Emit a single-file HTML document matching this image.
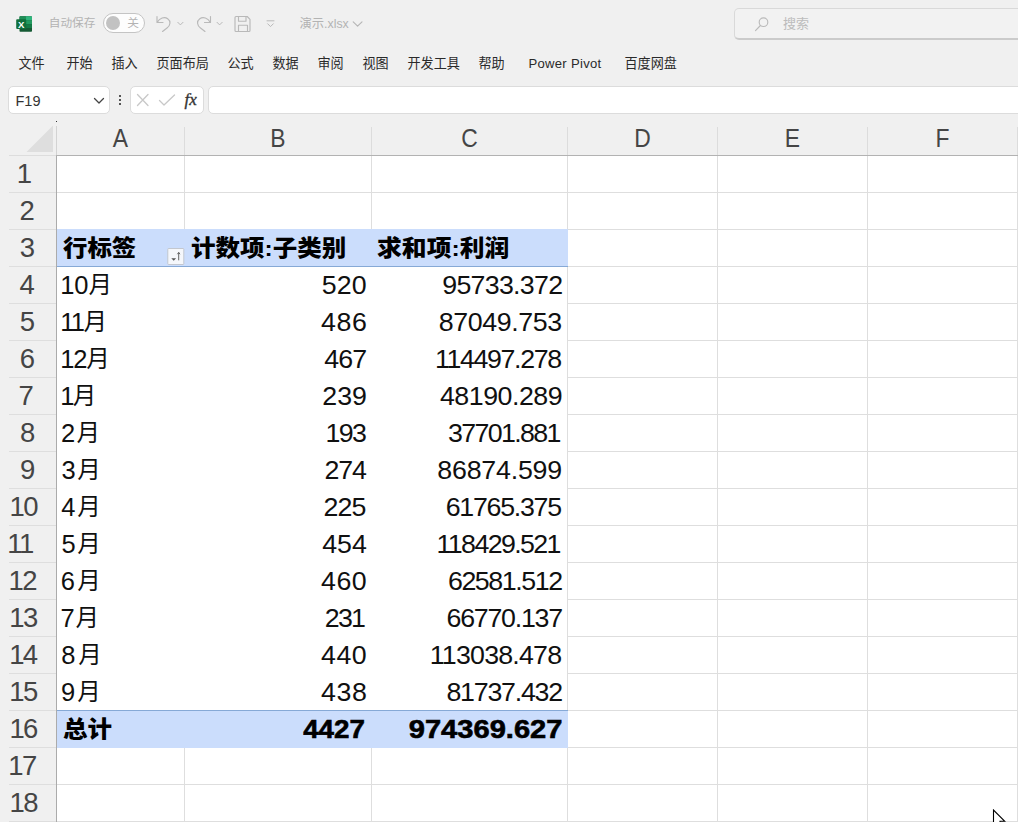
<!DOCTYPE html>
<html lang="zh-CN"><head><meta charset="utf-8"><title>演示.xlsx - Excel</title>
<style>
html,body{margin:0;padding:0;}
body{width:1018px;height:822px;overflow:hidden;background:#f0f0f0;position:relative;
 font-family:"Liberation Sans","Noto Sans CJK SC",sans-serif;color:#1a1a1a;}
.abs{position:absolute;}
.t{position:absolute;white-space:nowrap;line-height:1;}
.g{color:#b3b3b3;font-size:12px;}
.menu{position:absolute;top:56px;font-size:13.100px;color:#2a2a2a;white-space:nowrap;line-height:16px;}
.box{position:absolute;top:86px;height:28px;background:#fff;border:1px solid #dcdcdc;border-radius:5px;box-sizing:border-box;}
#sheet{position:absolute;left:0;top:120px;width:1018px;height:702px;background:#fff;}
.hl{position:absolute;left:57px;width:961px;height:1px;background:#dedede;}
.vl{position:absolute;top:36px;width:1px;height:666px;background:#dedede;}
.rn{position:absolute;left:0;text-align:center;font-size:27.500px;line-height:37px;color:#454545;height:37px;white-space:nowrap;}
.cn{position:absolute;top:0;text-align:center;font-size:26px;line-height:36px;color:#454545;height:36px;transform:scaleX(0.880);}
.cell{position:absolute;height:37px;line-height:37px;font-size:25.500px;color:#101010;white-space:nowrap;}
.cell .c{font-size:23.500px;letter-spacing:0;position:relative;top:-0.600px;}
.r{text-align:right;transform:scaleX(1.050);transform-origin:100% 50%;}
.hd{position:absolute;height:37px;line-height:37px;font-size:24.500px;font-weight:900;color:#000;white-space:nowrap;transform-origin:0 50%;}
.bn{position:absolute;height:37px;line-height:37px;font-size:25.500px;font-weight:700;color:#000;white-space:nowrap;text-align:right;transform-origin:100% 50%;-webkit-text-stroke:0.600px #000;}
</style></head><body>

<div id="title">
<svg class="abs" style="left:16px;top:16px" width="16" height="16" viewBox="0 0 16 16">
 <path d="M4.300 0.300 H15.200 a0.800 0.800 0 0 1 0.800 0.800 V14.900 a0.800 0.800 0 0 1 -0.800 0.800 H4.300 a0.800 0.800 0 0 1 -0.800 -0.800 V1.100 a0.800 0.800 0 0 1 0.800 -0.800 z" fill="#155a34"/>
 <path d="M4.300 0.300 H9.900 V4.200 H3.500 V1.100 a0.800 0.800 0 0 1 0.800 -0.800 z" fill="#1f8f57"/>
 <path d="M9.900 0.300 H15.200 a0.800 0.800 0 0 1 0.800 0.800 V4.200 H9.900 z" fill="#2fb57c"/>
 <rect x="3.500" y="4.200" width="6.400" height="4" fill="#117a41"/>
 <rect x="9.900" y="4.200" width="6.100" height="4" fill="#239a60"/>
 <rect x="9.900" y="8.200" width="6.100" height="3.800" fill="#157a46"/>
 <rect x="0.200" y="3.200" width="10" height="9.800" rx="0.900" fill="#116f3c"/>
 <text x="5.200" y="11.600" font-size="9.600" font-weight="700" fill="#fff" text-anchor="middle" font-family="Liberation Sans, sans-serif">X</text>
</svg>
<div class="t g" style="left:48.700px;top:17.200px;font-size:11.700px;">自动保存</div>
<div class="abs" style="left:103px;top:13px;width:42px;height:20px;border:1px solid #c4c4c4;border-radius:10px;box-sizing:border-box;background:#fdfdfd;"></div>
<div class="abs" style="left:106px;top:16px;width:14px;height:14px;border-radius:7px;background:#c2c2c2;"></div>
<div class="t g" style="left:127.200px;top:17.200px;font-size:11.700px;">关</div>
<svg class="abs" style="left:155px;top:13px" width="125" height="22" viewBox="0 0 125 22" fill="none" stroke="#b9b9b9" stroke-width="1.150" stroke-linecap="round" stroke-linejoin="round">
 <path d="M2 3.500 V9.500 H8 M2.300 9.200 C4.500 5 9.500 3.400 12.700 5.700 C16 8.100 15.600 12.300 12 15 L7.500 18.500"/>
 <path d="M22.800 9.300 l2.600 2.600 l2.600 -2.600" stroke-width="1"/>
 <path d="M55.500 3.500 V9.500 H49.500 M55.200 9.200 C53 5 48 3.400 44.800 5.700 C41.500 8.100 41.900 12.300 45.500 15 L50 18.500"/>
 <path d="M62 9.300 l2.600 2.600 l2.600 -2.600" stroke-width="1"/>
 <path d="M81 3.500 h11.200 l2.800 2.800 v11.200 a1 1 0 0 1 -1 1 h-13 a1 1 0 0 1 -1 -1 v-13 a1 1 0 0 1 1 -1 z M83.500 3.500 v4.700 h7.500 v-4.700 M83.500 18.500 v-6.300 h9 v6.300"/>
 <path d="M112 7.800 h7 M112.700 10.800 l2.800 2.800 l2.800 -2.800" stroke-width="1"/>
</svg>
<div class="t g" style="left:299.500px;top:17.500px;font-size:12.300px;">演示.xlsx</div>
<svg class="abs" style="left:352px;top:19px" width="12" height="10" viewBox="0 0 12 10" fill="none" stroke="#b6b6b6" stroke-width="1.150" stroke-linecap="round" stroke-linejoin="round"><path d="M1.200 2.800 l4.400 4.400 l4.400 -4.400"/></svg>
<div class="abs" style="left:734px;top:8px;width:300px;height:32px;border:1px solid #d9d9d9;border-bottom:2px solid #cbcbcb;border-radius:5px;box-sizing:border-box;background:#f2f2f2;"></div>
<svg class="abs" style="left:754px;top:16px" width="16" height="16" viewBox="0 0 16 16" fill="none" stroke="#bababa" stroke-width="1.150" stroke-linecap="round"><circle cx="9.500" cy="6.200" r="4.300"/><path d="M6.400 9.500 L1.500 14.600"/></svg>
<div class="t g" style="left:783px;top:17px;font-size:13px;color:#bcbcbc;">搜索</div>
</div>

<div class="menu" style="left:18.5px;">文件</div>
<div class="menu" style="left:66.5px;">开始</div>
<div class="menu" style="left:111.5px;">插入</div>
<div class="menu" style="left:156.5px;">页面布局</div>
<div class="menu" style="left:227.5px;">公式</div>
<div class="menu" style="left:272.5px;">数据</div>
<div class="menu" style="left:317.5px;">审阅</div>
<div class="menu" style="left:362.5px;">视图</div>
<div class="menu" style="left:407.5px;">开发工具</div>
<div class="menu" style="left:478.5px;">帮助</div>
<div class="menu" style="left:528.5px;letter-spacing:0.280px;">Power Pivot</div>
<div class="menu" style="left:624.5px;">百度网盘</div>

<div class="box" style="left:8px;width:102px;"></div>
<div class="t" style="left:15.500px;top:93.500px;font-size:14.500px;color:#333;">F19</div>
<svg class="abs" style="left:92.500px;top:96px" width="12" height="10" viewBox="0 0 12 10" fill="none" stroke="#444" stroke-width="1.300" stroke-linecap="round" stroke-linejoin="round"><path d="M1.500 2.500 l4.500 4.500 l4.500 -4.500"/></svg>
<div class="abs" style="left:119px;top:95px;width:2px;height:2px;background:#555;box-shadow:0 4px 0 #555,0 8px 0 #555;"></div>
<div class="box" style="left:130px;width:74px;"></div>
<svg class="abs" style="left:134px;top:90px" width="48" height="20" viewBox="0 0 48 20" fill="none" stroke="#c8c8c8" stroke-width="1.300" stroke-linecap="round" stroke-linejoin="round">
 <path d="M3.500 4.500 l10.500 11 M14 4.500 l-10.500 11"/>
 <path d="M25.500 10.500 l4.500 4.500 l10.500 -10"/>
</svg>
<div class="t" style="left:184.500px;top:90.500px;font-size:17px;font-style:italic;-webkit-text-stroke:0.350px #333;color:#333;font-family:'Liberation Serif',serif;">fx</div>
<div class="box" style="left:208px;width:820px;"></div>

<div id="sheet">
<div class="abs" style="left:0;top:0;width:1018px;height:35px;background:#f0f0f0;"></div>
<div class="abs" style="left:0;top:0;width:56px;height:702px;background:#f0f0f0;"></div>
<svg class="abs" style="left:26px;top:5px" width="28" height="28" viewBox="0 0 28 28"><path d="M27 0.500 V27 H0.500 Z" fill="#dedede"/></svg>
<div class="abs" style="left:56px;top:6px;width:1px;height:30px;background:#d3d3d3;"></div>
<div class="abs" style="left:9px;top:35px;width:47px;height:1px;background:#dddddd;"></div>
<div class="abs" style="left:56px;top:35px;width:962px;height:1px;background:#b2b2b2;"></div>
<div class="abs" style="left:56px;top:36px;width:1px;height:666px;background:#ababab;"></div>
<div class="cn" style="left:57px;width:127px;">A</div>
<div class="abs" style="left:184px;top:7px;width:1px;height:28px;background:#dcdcdc;"></div>
<div class="vl" style="left:184px;"></div>
<div class="cn" style="left:185px;width:186px;">B</div>
<div class="abs" style="left:371px;top:7px;width:1px;height:28px;background:#dcdcdc;"></div>
<div class="vl" style="left:371px;"></div>
<div class="cn" style="left:372px;width:195px;">C</div>
<div class="abs" style="left:567px;top:7px;width:1px;height:28px;background:#dcdcdc;"></div>
<div class="vl" style="left:567px;"></div>
<div class="cn" style="left:568px;width:149px;">D</div>
<div class="abs" style="left:717px;top:7px;width:1px;height:28px;background:#dcdcdc;"></div>
<div class="vl" style="left:717px;"></div>
<div class="cn" style="left:718px;width:149px;">E</div>
<div class="abs" style="left:867px;top:7px;width:1px;height:28px;background:#dcdcdc;"></div>
<div class="vl" style="left:867px;"></div>
<div class="cn" style="left:868px;width:149px;">F</div>
<div class="abs" style="left:1017px;top:7px;width:1px;height:28px;background:#dcdcdc;"></div>
<div class="vl" style="left:1017px;"></div>
<div class="rn" style="top:35px;left:16.756px;letter-spacing:0px;">1</div>
<div class="hl" style="top:72px;"></div>
<div class="abs" style="left:9px;top:72px;width:47px;height:1px;background:#dedede;"></div>
<div class="rn" style="top:72px;left:19.392px;letter-spacing:0px;">2</div>
<div class="hl" style="top:109px;"></div>
<div class="abs" style="left:9px;top:109px;width:47px;height:1px;background:#dedede;"></div>
<div class="rn" style="top:109px;left:19.625px;letter-spacing:0px;">3</div>
<div class="hl" style="top:146px;"></div>
<div class="abs" style="left:9px;top:146px;width:47px;height:1px;background:#dedede;"></div>
<div class="rn" style="top:146px;left:19.437px;letter-spacing:0px;">4</div>
<div class="hl" style="top:183px;"></div>
<div class="abs" style="left:9px;top:183px;width:47px;height:1px;background:#dedede;"></div>
<div class="rn" style="top:183px;left:19.81px;letter-spacing:0px;">5</div>
<div class="hl" style="top:220px;"></div>
<div class="abs" style="left:9px;top:220px;width:47px;height:1px;background:#dedede;"></div>
<div class="rn" style="top:220px;left:19.788px;letter-spacing:0px;">6</div>
<div class="hl" style="top:257px;"></div>
<div class="abs" style="left:9px;top:257px;width:47px;height:1px;background:#dedede;"></div>
<div class="rn" style="top:257px;left:18.436px;letter-spacing:0px;">7</div>
<div class="hl" style="top:294px;"></div>
<div class="abs" style="left:9px;top:294px;width:47px;height:1px;background:#dedede;"></div>
<div class="rn" style="top:294px;left:19.937px;letter-spacing:0px;">8</div>
<div class="hl" style="top:331px;"></div>
<div class="abs" style="left:9px;top:331px;width:47px;height:1px;background:#dedede;"></div>
<div class="rn" style="top:331px;left:19.93px;letter-spacing:0px;">9</div>
<div class="hl" style="top:368px;"></div>
<div class="abs" style="left:9px;top:368px;width:47px;height:1px;background:#dedede;"></div>
<div class="rn" style="top:368px;left:9.591px;letter-spacing:-1.6px;">10</div>
<div class="hl" style="top:405px;"></div>
<div class="abs" style="left:9px;top:405px;width:47px;height:1px;background:#dedede;"></div>
<div class="rn" style="top:405px;left:7.312px;letter-spacing:-1.6px;">11</div>
<div class="hl" style="top:442px;"></div>
<div class="abs" style="left:9px;top:442px;width:47px;height:1px;background:#dedede;"></div>
<div class="rn" style="top:442px;left:8.605px;letter-spacing:-1.6px;">12</div>
<div class="hl" style="top:479px;"></div>
<div class="abs" style="left:9px;top:479px;width:47px;height:1px;background:#dedede;"></div>
<div class="rn" style="top:479px;left:9.317px;letter-spacing:-1.6px;">13</div>
<div class="hl" style="top:516px;"></div>
<div class="abs" style="left:9px;top:516px;width:47px;height:1px;background:#dedede;"></div>
<div class="rn" style="top:516px;left:9.17px;letter-spacing:-1.6px;">14</div>
<div class="hl" style="top:553px;"></div>
<div class="abs" style="left:9px;top:553px;width:47px;height:1px;background:#dedede;"></div>
<div class="rn" style="top:553px;left:9.293px;letter-spacing:-1.6px;">15</div>
<div class="hl" style="top:590px;"></div>
<div class="abs" style="left:9px;top:590px;width:47px;height:1px;background:#dedede;"></div>
<div class="rn" style="top:590px;left:9.427px;letter-spacing:-1.6px;">16</div>
<div class="hl" style="top:627px;"></div>
<div class="abs" style="left:9px;top:627px;width:47px;height:1px;background:#dedede;"></div>
<div class="rn" style="top:627px;left:8.221px;letter-spacing:-1.6px;">17</div>
<div class="hl" style="top:664px;"></div>
<div class="abs" style="left:9px;top:664px;width:47px;height:1px;background:#dedede;"></div>
<div class="rn" style="top:664px;left:9.522px;letter-spacing:-1.6px;">18</div>
<div class="hl" style="top:701px;"></div>
<div class="abs" style="left:9px;top:701px;width:47px;height:1px;background:#dedede;"></div>
<div class="abs" style="left:57px;top:146px;width:510px;height:444px;background:#fff;"></div>
<div class="abs" style="left:57px;top:109px;width:511px;height:37px;background:#cbddfc;border-bottom:1px solid #86a9d6;"></div>
<div class="abs" style="left:57px;top:590px;width:511px;height:37px;background:#cbddfc;border-top:1px solid #86a9d6;"></div>
<div class="hd" style="left:63.043px;top:110px;transform:scale(0.997,0.920);">行标签</div>
<div class="hd" style="left:191.113px;top:110px;transform:scale(1.001,0.920);">计数项:子类别</div>
<div class="hd" style="left:377.421px;top:110px;transform:scale(1.013,0.920);">求和项:利润</div>
<svg class="abs" style="left:167px;top:128px" width="18" height="17" viewBox="0 0 18 17">
<rect x="0.800" y="0.500" width="16" height="16" rx="0.800" fill="#f5f7fb" stroke="#bfc3ca" stroke-width="0.900"/>
<path d="M4.300 10.200 h4.800 l-2.400 2.600 z" fill="#555"/><path d="M11.700 12.300 V4.600 M10.400 6.200 L11.700 4.400 L13 6.200" stroke="#555" stroke-width="0.900" fill="none"/>
</svg>
<div class="cell" style="left:60.165px;top:147px;letter-spacing:-0.019px;">10<span class="c">月</span></div>
<div class="cell r" style="left:185px;width:181.97px;top:147px;letter-spacing:0.206px;">520</div>
<div class="cell r" style="left:372px;width:190.343px;top:147px;letter-spacing:-0.687px;">95733.372</div>
<div class="cell" style="left:60.165px;top:184px;letter-spacing:-1.6px;">11<span class="c">月</span></div>
<div class="cell r" style="left:185px;width:182.479px;top:184px;letter-spacing:0.538px;">486</div>
<div class="cell r" style="left:372px;width:189.693px;top:184px;letter-spacing:-0.391px;">87049.753</div>
<div class="cell" style="left:60.165px;top:221px;letter-spacing:-1.092px;">12<span class="c">月</span></div>
<div class="cell r" style="left:185px;width:181.451px;top:221px;letter-spacing:-0.782px;">467</div>
<div class="cell r" style="left:372px;width:188.683px;top:221px;letter-spacing:-1.318px;">114497.278</div>
<div class="cell" style="left:60.165px;top:258px;letter-spacing:-1.578px;">1<span class="c">月</span></div>
<div class="cell r" style="left:185px;width:181.851px;top:258px;letter-spacing:-0.055px;">239</div>
<div class="cell r" style="left:372px;width:190.166px;top:258px;letter-spacing:-0.462px;">48190.289</div>
<div class="cell" style="left:60.954px;top:295px;letter-spacing:1.468px;">2<span class="c">月</span></div>
<div class="cell r" style="left:185px;width:180.179px;top:295px;letter-spacing:-1.6px;">193</div>
<div class="cell r" style="left:372px;width:187.887px;top:295px;letter-spacing:-1.549px;">37701.881</div>
<div class="cell" style="left:61.476px;top:332px;letter-spacing:1.465px;">3<span class="c">月</span></div>
<div class="cell r" style="left:185px;width:180.696px;top:332px;letter-spacing:-1.11px;">274</div>
<div class="cell r" style="left:372px;width:189.908px;top:332px;letter-spacing:-0.206px;">86874.599</div>
<div class="cell" style="left:61.246px;top:369px;letter-spacing:1.696px;">4<span class="c">月</span></div>
<div class="cell r" style="left:185px;width:180.71px;top:369px;letter-spacing:-0.747px;">225</div>
<div class="cell r" style="left:372px;width:188.835px;top:369px;letter-spacing:-1.209px;">61765.375</div>
<div class="cell" style="left:61.391px;top:406px;letter-spacing:1.55px;">5<span class="c">月</span></div>
<div class="cell r" style="left:185px;width:181.799px;top:406px;letter-spacing:-0.007px;">454</div>
<div class="cell r" style="left:372px;width:187.901px;top:406px;letter-spacing:-1.535px;">118429.521</div>
<div class="cell" style="left:60.871px;top:443px;letter-spacing:2.07px;">6<span class="c">月</span></div>
<div class="cell r" style="left:185px;width:182.213px;top:443px;letter-spacing:0.448px;">460</div>
<div class="cell r" style="left:372px;width:189.674px;top:443px;letter-spacing:-1.356px;">62581.512</div>
<div class="cell" style="left:60.525px;top:480px;letter-spacing:0.678px;">7<span class="c">月</span></div>
<div class="cell r" style="left:185px;width:179.316px;top:480px;letter-spacing:-1.6px;">231</div>
<div class="cell r" style="left:372px;width:189.835px;top:480px;letter-spacing:-1.195px;">66770.137</div>
<div class="cell" style="left:61.363px;top:517px;letter-spacing:2.591px;">8<span class="c">月</span></div>
<div class="cell r" style="left:185px;width:182.213px;top:517px;letter-spacing:0.448px;">440</div>
<div class="cell r" style="left:372px;width:189.33px;top:517px;letter-spacing:-0.749px;">113038.478</div>
<div class="cell" style="left:60.951px;top:554px;letter-spacing:1.992px;">9<span class="c">月</span></div>
<div class="cell r" style="left:185px;width:182.417px;top:554px;letter-spacing:0.517px;">438</div>
<div class="cell r" style="left:372px;width:189.843px;top:554px;letter-spacing:-1.187px;">81737.432</div>
<div class="hd" style="left:63px;top:591px;transform:scale(1,0.920);">总计</div>
<div class="bn" style="left:185px;width:179.961px;top:591px;transform:scaleX(1.089);">4427</div>
<div class="bn" style="left:372px;width:190.456px;top:591px;transform:scaleX(1.141);">974369.627</div>
<svg class="abs" style="left:992px;top:689px" width="14" height="14" viewBox="0 0 14 14"><path d="M1.500 1 V14 H8 V12.300 H12.800 Z" fill="#fff" stroke="#000" stroke-width="1.100"/></svg>
</div>
<div class="abs" style="left:56px;top:121px;width:1px;height:1px;background:#333;"></div>
</body></html>
